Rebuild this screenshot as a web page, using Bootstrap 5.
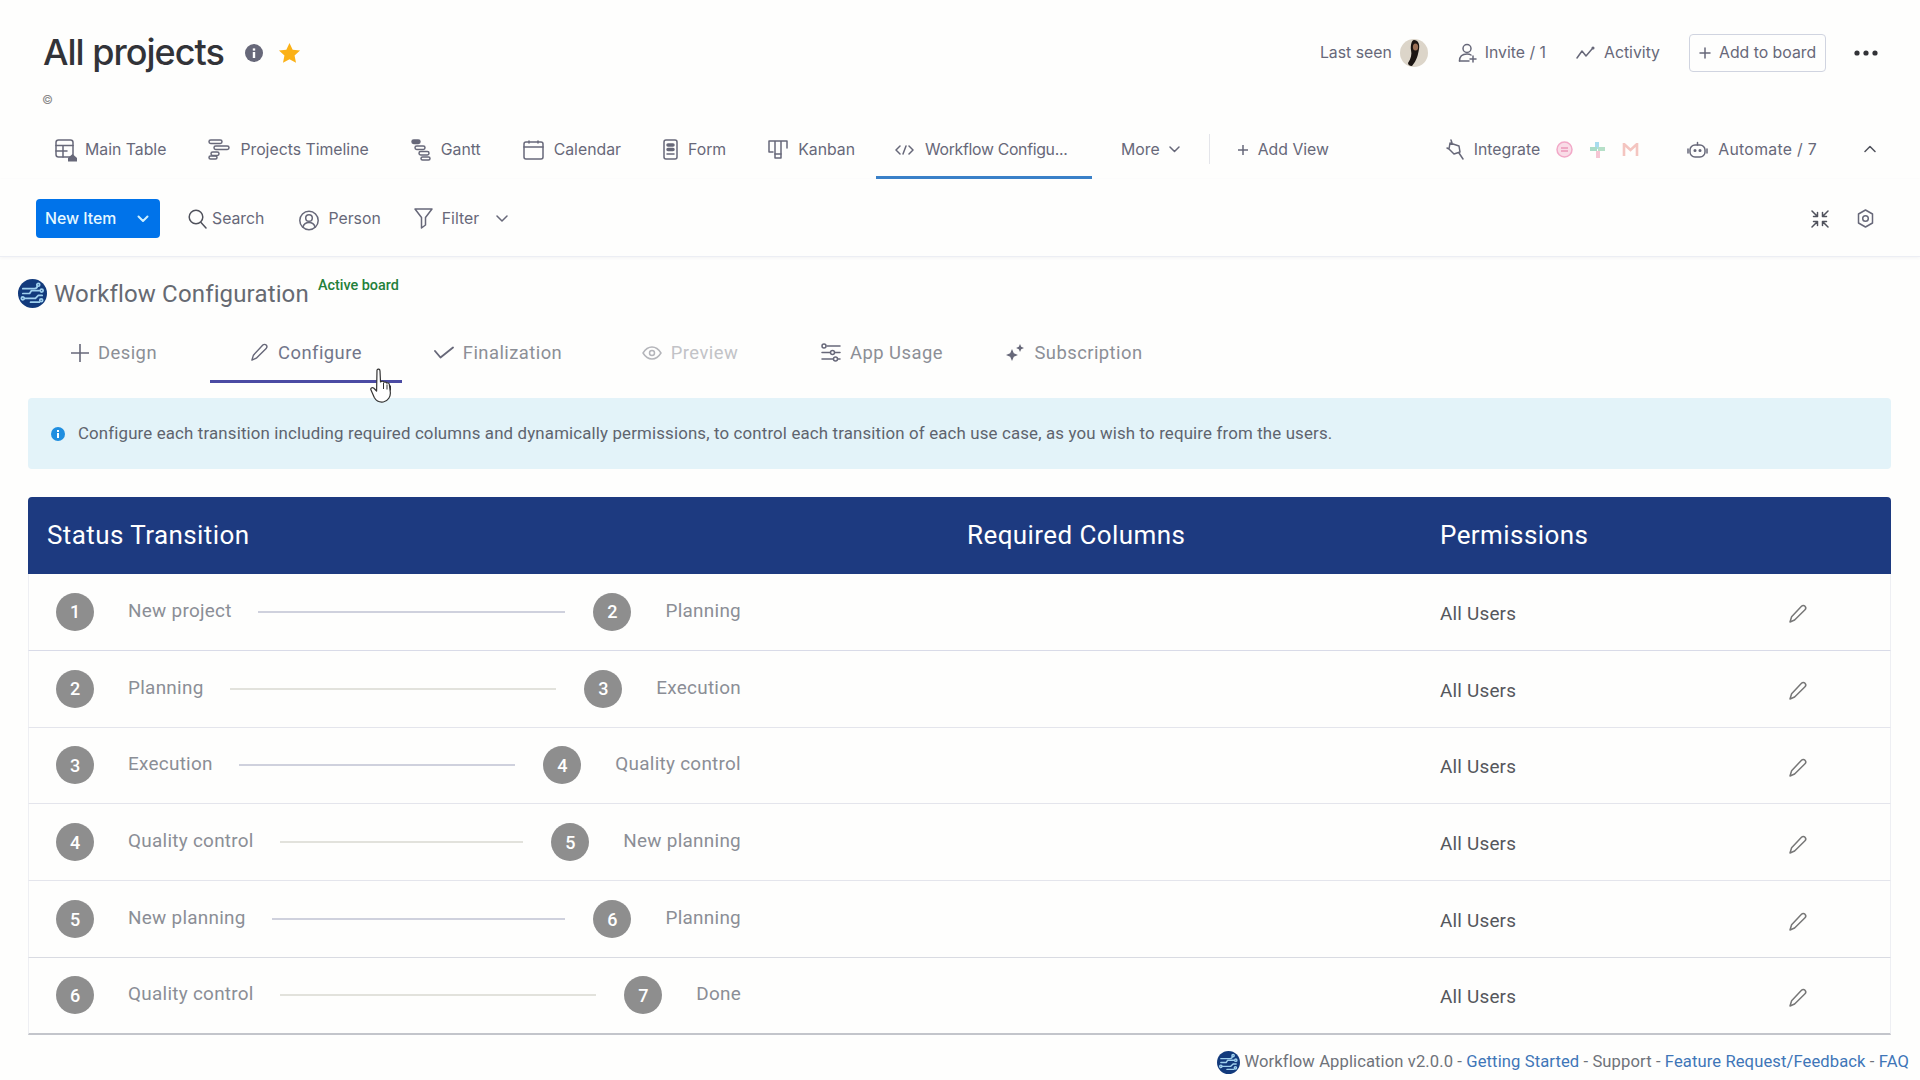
<!DOCTYPE html>
<html lang="en">
<head>
<meta charset="utf-8">
<title>All projects</title>
<link href="https://cdn.jsdelivr.net/npm/bootstrap@5.3.0/dist/css/bootstrap.min.css" rel="stylesheet">
<style>
html,body{height:1080px;overflow:hidden}
body{background:#fefefd;font-family:Inter,"Liberation Sans",sans-serif;color:#676879;position:relative}
svg{display:block;flex:none}
.ico{fill:none;stroke:#676879;stroke-width:1.5;stroke-linecap:round;stroke-linejoin:round}
.ico-dark{stroke:#50525c}
.ico-off{stroke:#b4b5ba}
.defs-box{position:absolute}
.top-row{height:86px;padding:20px 42px 0 43px}
.page-title{font-size:36px;font-weight:500;letter-spacing:-1px;color:#323338;margin:0;line-height:1.2}
.t-info{margin-left:21px}
.t-star{margin-left:15px}
.top-txt{font-size:15.8px;color:#676879;white-space:nowrap}
.ml-8{margin-left:8px}
.ml-9{margin-left:9px}
.ml-30{margin-left:30px}
.ml-29{margin-left:29px}
.ml-28{margin-left:28px}
.add-box{height:38px;width:137px;border:1px solid #d0d4e0;border-radius:4px;padding-left:9px}
.copy-row{height:27px;padding-left:42px;color:#8a8a8a;font-size:12px;line-height:27px}
.view-row{height:60px;margin-top:6px;padding-left:34px;padding-right:44px}
.view-tab{height:60px;padding:4px 21px 0;gap:10px;color:#676879;font-size:15.8px;white-space:nowrap;border-bottom:3px solid transparent;text-decoration:none}
.view-tab.tab-main{gap:7px}
.view-tab.on{border-bottom-color:#3a80c8;padding:4px 0 0 19px;width:216px;letter-spacing:-.3px;gap:11px}
.view-tab.tab-more{padding-left:29px;padding-right:12px;gap:9px}
.view-tab.tab-bare{padding-left:0;padding-right:0}
.view-tab.tab-auto{letter-spacing:.3px}
.vsep{width:1px;height:30px;background:#e4e5ea;margin:0 7px 0 17px}
.int-icons{gap:16px;margin-left:6px;margin-right:48px}
.t-chev{margin-left:47px}
.tool-row{height:78px;padding:20px 46px 19px 36px;border-bottom:1px solid #eceef4;box-shadow:0 1px 3px rgba(60,60,110,.06);align-items:flex-start}
.new-btn{width:124px;height:39px;background:#0073ea;border:0;border-radius:4px;color:#e6f8ff;font-size:15.8px;font-weight:500;padding:0 9px}
.new-btn svg{margin-right:2px}
.tool-i{height:39px;gap:5px}
.tool-person{margin-left:35px;gap:9px}
.tool-person svg{margin-top:3px}
.tool-filter{margin-left:33px;gap:9px}
.tool-filter .ico:last-child{margin-left:8px}
.tool-end{gap:28px}
.wf-head{margin-top:23px;padding-left:18px;height:28px;position:relative}
.wf-head svg{margin-top:-1px}
.wf-name{font-family:Roboto,sans-serif;font-size:24px;letter-spacing:.15px;color:#666a72;margin:0 0 0 7px;font-weight:400;line-height:29px}
.wf-act{font-family:Roboto,sans-serif;font-size:14.4px;font-weight:500;color:#23803a;margin:-3px 0 0 9px;line-height:17px}
.wf-tabs{margin-top:15px;padding-left:18px;height:60px}
.wf-tab{width:192px;height:60px;padding-top:2px;gap:9px;font-family:Roboto,sans-serif;font-size:18.4px;letter-spacing:.45px;color:#8c8f96;border-bottom:3px solid transparent;text-decoration:none}
.wf-tab.on{border-bottom-color:#4b4ba3;color:#72768a}
.wf-tab.off{color:#c2c3c7}
.wf-note{margin:15px 29px 0 28px;height:71px;background:#e3f3f9;border:0;border-radius:4px;padding:0 0 0 23px;gap:13px;font-family:Roboto,sans-serif;font-size:16.85px;letter-spacing:.15px;color:#5e646e}
.wf-table{margin:28px 0 0 28px;width:1863px;table-layout:fixed;border-collapse:separate;border-spacing:0}
.col-a{width:939px}
.col-b{width:473px}
.wf-table th{height:77px;background:#1d3a80;color:#fff;font-family:Roboto,sans-serif;font-weight:400;font-size:26px;letter-spacing:.42px;vertical-align:middle;border:0;padding:0}
.wf-table th:first-child{border-radius:4px 0 0 0;padding-left:19px}
.wf-table th:last-child{border-radius:0 4px 0 0}
.wf-table td{height:76.8px;padding:0;vertical-align:middle;background:transparent;border-bottom:1px solid #e4e5ec;font-family:Roboto,sans-serif}
.wf-table td:first-child{padding-left:27px;border-left:1px solid #eeeff3}
.wf-table td:last-child{border-right:1px solid #eeeff3}
.wf-table tr:first-child td{border-bottom-color:#d9dbe8}
.wf-table tr:nth-child(5) td{border-bottom-color:#d9dbe2}
.wf-table tr:last-child td{border-bottom:2px solid #c3c5cb}
.trans{width:685px;font-size:18.9px;letter-spacing:.28px;color:#8b8e96}
.step{width:38px;height:38px;border-radius:50%;background:#8e8e8e;color:#fff;font-size:18px;font-weight:500;letter-spacing:0;flex:none}
.st-a{margin:0 26px 0 34px;white-space:nowrap;position:relative;top:-1px}
.st-b{margin-left:34px;white-space:nowrap;position:relative;top:-1px}
.st-line{flex:1;height:2px;background:#cfd1dd;margin-right:28px}
tr:nth-child(2) .st-line,tr:nth-child(4) .st-line,tr:nth-child(6) .st-line{background:#e2e2dc}
.perm{width:368px;font-size:18.9px;letter-spacing:.2px;color:#55575c;position:relative;top:2px}
.perm svg{color:#777;margin-top:1px}
.wf-foot{margin-top:14px;height:28px;padding-right:11px;gap:4px;font-family:Roboto,sans-serif;font-size:16.6px;letter-spacing:.1px;color:#6f737a;white-space:nowrap}
.wf-foot a{color:#3f76b8;text-decoration:none}
.hand{position:absolute;left:370px;top:368px}
</style>
</head>
<body>
<svg class="defs-box" width="0" height="0">
  <symbol id="wf-logo" viewBox="0 0 30 30">
    <circle cx="15" cy="15" r="15" fill="#123a7c"/>
    <g fill="none" stroke="#9fd0ee" stroke-width="1.8" stroke-linecap="round" stroke-linejoin="round">
      <path d="M5 10h12a3 3 0 0 0 3-3"/><path d="M5 15h7l2-3h8"/><path d="M7 20h11l3-3h4"/><path d="M13 24h9"/>
      <circle cx="21" cy="6" r="1.5"/><circle cx="24.5" cy="12" r="1.5"/><circle cx="5" cy="20" r="1.5"/><circle cx="24" cy="22" r="1.5"/>
    </g>
  </symbol>
  <symbol id="wf-pencil" viewBox="0 0 20 20">
    <path d="M13.5 2.200c1-1 2.600-1 3.500 0s1 2.500 0 3.500L6.600 16 2 18l1.600-5.200z" fill="none" stroke="currentColor" stroke-width="1.500" stroke-linejoin="round"/>
  </symbol>
</svg>

<div class="d-flex align-items-center top-row">
  <h1 class="page-title">All projects</h1>
  <svg class="t-info" width="18" height="18" viewBox="0 0 18 18"><circle cx="9" cy="9" r="9" fill="#676879"/><rect x="7.800" y="8" width="2.400" height="6" fill="#fff"/><rect x="7.800" y="4.400" width="2.400" height="2.200" fill="#fff"/></svg>
  <svg class="t-star" width="23" height="22" viewBox="0 0 24 23"><path d="M12 1l3.300 7 7.700.9-5.700 5.200 1.500 7.600L12 18l-6.800 3.700 1.500-7.600L1 8.900l7.700-.9z" fill="#fbb116"/></svg>
  <div class="ms-auto d-flex align-items-center">
    <span class="top-txt">Last seen</span>
    <svg class="ml-8" width="28" height="28" viewBox="0 0 28 28"><circle cx="14" cy="14" r="14" fill="#dcd5c9"/><path d="M14 1c4 0 6 4 5 9-1 6-2 11-7 17-3 0-4-2-4-3 3-4 4-9 3-13-.6-4 .5-10 3-10z" fill="#1b1512"/><ellipse cx="15.500" cy="8" rx="2.600" ry="3.600" fill="#9a6f55"/></svg>
    <svg class="ico ml-30" width="19" height="20" viewBox="0 0 19 20"><circle cx="9" cy="5.500" r="4"/><path d="M1.500 18c0-4.500 3-7 7.500-7 1.500 0 3 .3 4 1"/><path d="M1.500 18H11M15 13v6M12 16h6"/></svg>
    <span class="top-txt ml-8">Invite / 1</span>
    <svg class="ico ml-30" width="19" height="14" viewBox="0 0 19 14"><path d="M1 12l5-7 4 5 6-7"/><circle cx="17" cy="2" r=".8"/></svg>
    <span class="top-txt ml-9">Activity</span>
    <div class="d-flex align-items-center add-box ml-29">
      <svg class="ico" width="12" height="12" viewBox="0 0 12 12"><path d="M6 1v10M1 6h10"/></svg>
      <span class="top-txt ml-8">Add to board</span>
    </div>
    <svg class="ml-28" width="24" height="6" viewBox="0 0 24 6" fill="#323338"><circle cx="3" cy="3" r="2.600"/><circle cx="12" cy="3" r="2.600"/><circle cx="21" cy="3" r="2.600"/></svg>
  </div>
</div>
<div class="copy-row">©</div>

<div class="nav flex-nowrap align-items-center view-row">
  <a class="view-tab tab-main d-flex align-items-center" href="#">
    <svg class="ico" width="23" height="24" viewBox="0 0 23 24"><rect x="1" y="2" width="17" height="17" rx="2.500"/><path d="M1 7.500h17M1 13h11M8 7.500V19"/><path d="M13 20l4.500-4 4.500 4v3.500h-9z" fill="#676879" stroke="none"/></svg>Main Table</a>
  <a class="view-tab d-flex align-items-center" href="#">
    <svg class="ico" width="22" height="21" viewBox="0 0 22 21"><rect x="1" y="1" width="13" height="3.500" rx="1.700"/><rect x="6" y="7" width="15" height="3.500" rx="1.700"/><rect x="3" y="13" width="8" height="3.500" rx="1.700"/><rect x="1" y="17" width="8" height="3" rx="1.500"/></svg>Projects Timeline</a>
  <a class="view-tab d-flex align-items-center" href="#">
    <svg class="ico" width="20" height="22" viewBox="0 0 20 22"><rect x="1" y="1" width="8" height="3.500" rx="1.700" fill="#676879"/><rect x="4" y="7" width="10" height="3.500" rx="1.700"/><rect x="8" y="12.500" width="10" height="3.500" rx="1.700"/><rect x="10" y="18" width="9" height="3" rx="1.500"/></svg>Gantt</a>
  <a class="view-tab d-flex align-items-center" href="#">
    <svg class="ico" width="21" height="20" viewBox="0 0 21 20"><rect x="1" y="2" width="19" height="17" rx="2"/><path d="M1 7h19M6 1v2M15 1v2"/></svg>Calendar</a>
  <a class="view-tab d-flex align-items-center" href="#">
    <svg class="ico" width="15" height="21" viewBox="0 0 15 21"><rect x="1" y="1" width="13" height="19" rx="2"/><rect x="4" y="5" width="7" height="2" rx="1" fill="#676879"/><rect x="4" y="9.500" width="7" height="2" rx="1" fill="#676879"/><path d="M4 15h7"/></svg>Form</a>
  <a class="view-tab d-flex align-items-center" href="#">
    <svg class="ico" width="20" height="21" viewBox="0 0 20 21"><path d="M1 2h18v7M1 2v11h4M7 2v17h6V2"/><path d="M7 15h6"/></svg>Kanban</a>
  <a class="view-tab on d-flex align-items-center" href="#">
    <svg class="ico" width="19" height="10" viewBox="0 0 19 10"><path d="M5 1L1 5l4 4M14 1l4 4-4 4M11 1L8 9"/></svg>Workflow Configu...</a>
  <a class="view-tab tab-more d-flex align-items-center" href="#">More
    <svg class="ico" width="11" height="7" viewBox="0 0 11 7"><path d="M1 1l4.500 4.500L10 1"/></svg></a>
  <div class="vsep"></div>
  <a class="view-tab d-flex align-items-center" href="#">
    <svg class="ico" width="10" height="10" viewBox="0 0 10 10"><path d="M5 0v10M0 5h10"/></svg>Add View</a>
  <a class="view-tab tab-bare d-flex align-items-center ms-auto" href="#">
    <svg class="ico" width="18" height="21" viewBox="0 0 18 21"><path d="M4 4l9 3 1 6-6 2-5-5zM1 9l2 1M5 1l1 3M13 14l4 6"/></svg>Integrate
    <span class="d-flex align-items-center int-icons">
      <svg width="17" height="17" viewBox="0 0 17 17"><circle cx="8.500" cy="8.500" r="7.500" fill="#f9dce7" stroke="#f2a9c8" stroke-width="1.500"/><path d="M5 7h7M5 10h7" stroke="#eb97b9" stroke-width="1.500"/></svg>
      <svg width="17" height="18" viewBox="0 0 17 18"><rect x="6" y="1" width="4" height="7" fill="#a8dcee"/><rect x="1" y="6" width="7" height="4" fill="#aadcc8"/><rect x="9" y="6" width="7" height="4" fill="#b6e0c8"/><rect x="7" y="10" width="4" height="7" fill="#f5c6d4"/></svg>
      <svg width="17" height="14" viewBox="0 0 17 14"><path d="M2 13V1l6.500 6L15 1v12" fill="none" stroke="#f4c5c0" stroke-width="2.600"/></svg>
    </span></a>
  <a class="view-tab tab-bare tab-auto d-flex align-items-center" href="#">
    <svg class="ico" width="21" height="18" viewBox="0 0 21 18"><rect x="3" y="4" width="15" height="12" rx="5"/><path d="M1 8v4M20 8v4M10.500 4V1.500"/><circle cx="8" cy="9.500" r=".8"/><circle cx="13" cy="9.500" r=".8"/></svg>Automate / 7</a>
  <svg class="ico ico-dark t-chev" width="12" height="8" viewBox="0 0 12 8"><path d="M1 6.500l5-5 5 5"/></svg>
</div>

<div class="d-flex tool-row">
  <button class="new-btn btn d-flex align-items-center justify-content-between" type="button">New Item
    <svg width="12" height="8" viewBox="0 0 12 8" fill="none" stroke="#cdefff" stroke-width="2" stroke-linecap="round" stroke-linejoin="round"><path d="M1.500 1.500L6 6l4.500-4.500"/></svg></button>
  <div class="d-flex align-items-center tool-i ml-28">
    <svg class="ico ico-dark" width="19" height="20" viewBox="0 0 19 20"><circle cx="8" cy="8" r="6.800"/><path d="M13 13.500l5 5.500"/></svg><span class="top-txt">Search</span>
  </div>
  <div class="d-flex align-items-center tool-i tool-person">
    <svg class="ico" width="20" height="21" viewBox="0 0 20 21"><circle cx="10" cy="10.500" r="9.200"/><circle cx="10" cy="8" r="3.300"/><path d="M4 17c.8-3 3-4.500 6-4.500s5.200 1.500 6 4.500"/></svg><span class="top-txt">Person</span>
  </div>
  <div class="d-flex align-items-center tool-i tool-filter">
    <svg class="ico" width="19" height="21" viewBox="0 0 19 21"><path d="M1 1h17l-6.500 8.500V17l-4 3V9.500z"/></svg><span class="top-txt">Filter</span>
    <svg class="ico" width="12" height="7" viewBox="0 0 12 7"><path d="M1 1l5 5 5-5"/></svg>
  </div>
  <div class="ms-auto d-flex align-items-center tool-i tool-end">
    <svg class="ico ico-dark" width="18" height="18" viewBox="0 0 18 18"><path d="M1 1l5.500 5.500M6.500 2.500v4h-4M17 1l-5.500 5.500M11.500 2.500v4h4M1 17l5.500-5.500M6.500 15.500v-4h-4M17 17l-5.500-5.500M11.500 15.500v-4h4"/></svg>
    <svg class="ico" width="17" height="19" viewBox="0 0 17 19"><path d="M8.500 1l7 4v9l-7 4-7-4V5z"/><circle cx="8.500" cy="9.500" r="2.800"/></svg>
  </div>
</div>

<div class="d-flex align-items-start wf-head">
  <svg width="29" height="29"><use href="#wf-logo"/></svg>
  <h2 class="wf-name">Workflow Configuration</h2>
  <span class="wf-act">Active board</span>
</div>
<div class="d-flex wf-tabs">
  <a class="wf-tab d-flex align-items-center justify-content-center" href="#"><svg class="ico" width="18" height="18" viewBox="0 0 18 18"><path d="M9 0v18M0 9h18" stroke-width="1.600"/></svg>Design</a>
  <a class="wf-tab on d-flex align-items-center justify-content-center" href="#"><svg class="ico" width="19" height="19" viewBox="0 0 20 20"><path d="M13.500 2.200c1-1 2.600-1 3.500 0s1 2.500 0 3.500L6.600 16 2 18l1.600-5.200z"/></svg>Configure</a>
  <a class="wf-tab d-flex align-items-center justify-content-center" href="#"><svg class="ico" width="20" height="13" viewBox="0 0 20 13"><path d="M1 5l5.500 6.500L19 1.500" stroke-width="1.900"/></svg>Finalization</a>
  <a class="wf-tab off d-flex align-items-center justify-content-center" href="#"><svg class="ico ico-off" width="20" height="14" viewBox="0 0 20 14"><path d="M1 7c2.500-4 5.500-6 9-6s6.500 2 9 6c-2.500 4-5.500 6-9 6s-6.500-2-9-6z"/><circle cx="10" cy="7" r="2.500"/></svg>Preview</a>
  <a class="wf-tab d-flex align-items-center justify-content-center" href="#"><svg class="ico" width="20" height="19" viewBox="0 0 20 19"><path d="M6 3h13M1 9.500h8M14 9.500h5M1 16h11M17 16h2"/><circle cx="3" cy="3" r="2"/><circle cx="11.500" cy="9.500" r="2"/><circle cx="14.500" cy="16" r="2"/></svg>App Usage</a>
  <a class="wf-tab d-flex align-items-center justify-content-center" href="#"><svg width="20" height="18" viewBox="0 0 20 18" fill="#676879"><path d="M7 5l1.800 4.200L13 11l-4.200 1.800L7 17l-1.800-4.200L1 11l4.200-1.800z"/><path d="M15 0l1.200 2.800L19 4l-2.800 1.200L15 8l-1.200-2.800L11 4l2.800-1.200z"/></svg>Subscription</a>
</div>

<div class="alert d-flex align-items-center mb-0 wf-note" role="alert">
  <svg width="14" height="14" viewBox="0 0 14 14"><circle cx="7" cy="7" r="7" fill="#1f8ee0"/><rect x="6" y="6" width="2" height="5" fill="#fff"/><rect x="6" y="3" width="2" height="2" fill="#fff"/></svg>
  <span>Configure each transition including required columns and dynamically permissions, to control each transition of each use case, as you wish to require from the users.</span>
</div>

<table class="table mb-0 wf-table">
  <colgroup><col class="col-a"><col class="col-b"><col></colgroup>
  <thead><tr><th>Status Transition</th><th>Required Columns</th><th>Permissions</th></tr></thead>
  <tbody>
    <tr><td><div class="d-flex align-items-center trans"><span class="step d-flex align-items-center justify-content-center">1</span><span class="st-a">New project</span><span class="st-line"></span><span class="step d-flex align-items-center justify-content-center">2</span><span class="st-b">Planning</span></div></td><td></td><td><div class="d-flex align-items-center justify-content-between perm">All Users<svg width="20" height="20"><use href="#wf-pencil"/></svg></div></td></tr>
    <tr><td><div class="d-flex align-items-center trans"><span class="step d-flex align-items-center justify-content-center">2</span><span class="st-a">Planning</span><span class="st-line"></span><span class="step d-flex align-items-center justify-content-center">3</span><span class="st-b">Execution</span></div></td><td></td><td><div class="d-flex align-items-center justify-content-between perm">All Users<svg width="20" height="20"><use href="#wf-pencil"/></svg></div></td></tr>
    <tr><td><div class="d-flex align-items-center trans"><span class="step d-flex align-items-center justify-content-center">3</span><span class="st-a">Execution</span><span class="st-line"></span><span class="step d-flex align-items-center justify-content-center">4</span><span class="st-b">Quality control</span></div></td><td></td><td><div class="d-flex align-items-center justify-content-between perm">All Users<svg width="20" height="20"><use href="#wf-pencil"/></svg></div></td></tr>
    <tr><td><div class="d-flex align-items-center trans"><span class="step d-flex align-items-center justify-content-center">4</span><span class="st-a">Quality control</span><span class="st-line"></span><span class="step d-flex align-items-center justify-content-center">5</span><span class="st-b">New planning</span></div></td><td></td><td><div class="d-flex align-items-center justify-content-between perm">All Users<svg width="20" height="20"><use href="#wf-pencil"/></svg></div></td></tr>
    <tr><td><div class="d-flex align-items-center trans"><span class="step d-flex align-items-center justify-content-center">5</span><span class="st-a">New planning</span><span class="st-line"></span><span class="step d-flex align-items-center justify-content-center">6</span><span class="st-b">Planning</span></div></td><td></td><td><div class="d-flex align-items-center justify-content-between perm">All Users<svg width="20" height="20"><use href="#wf-pencil"/></svg></div></td></tr>
    <tr><td><div class="d-flex align-items-center trans"><span class="step d-flex align-items-center justify-content-center">6</span><span class="st-a">Quality control</span><span class="st-line"></span><span class="step d-flex align-items-center justify-content-center">7</span><span class="st-b">Done</span></div></td><td></td><td><div class="d-flex align-items-center justify-content-between perm">All Users<svg width="20" height="20"><use href="#wf-pencil"/></svg></div></td></tr>
  </tbody>
</table>

<div class="d-flex align-items-center justify-content-end wf-foot">
  <svg width="23" height="23"><use href="#wf-logo"/></svg>
  <span>Workflow Application v2.0.0 - <a href="#">Getting Started</a> - Support - <a href="#">Feature Request/Feedback</a> - <a href="#">FAQ</a></span>
</div>

<svg class="hand" width="26" height="36" viewBox="0 0 26 36"><path d="M7 2c1-1.500 3-1 3 1l.5 11 1-.5c1-.5 2 0 2.500.8 1-.6 2.200-.3 2.700.7 1-.5 2.300 0 2.600 1.200l1 8c.4 4-2 9-7 9.800-4 .5-7-1-9-4.500L1 22c-.8-1.500 1-3 2.600-2L6.600 23z" fill="#fff" stroke="#333" stroke-width="1.200" stroke-linejoin="round"/><path d="M13.500 15v6M17 16.500v5M20.500 17.500v5" stroke="#333" stroke-width="1"/></svg>

<script src="https://cdn.jsdelivr.net/npm/bootstrap@5.3.0/dist/js/bootstrap.bundle.min.js"></script>
</body>
</html>
